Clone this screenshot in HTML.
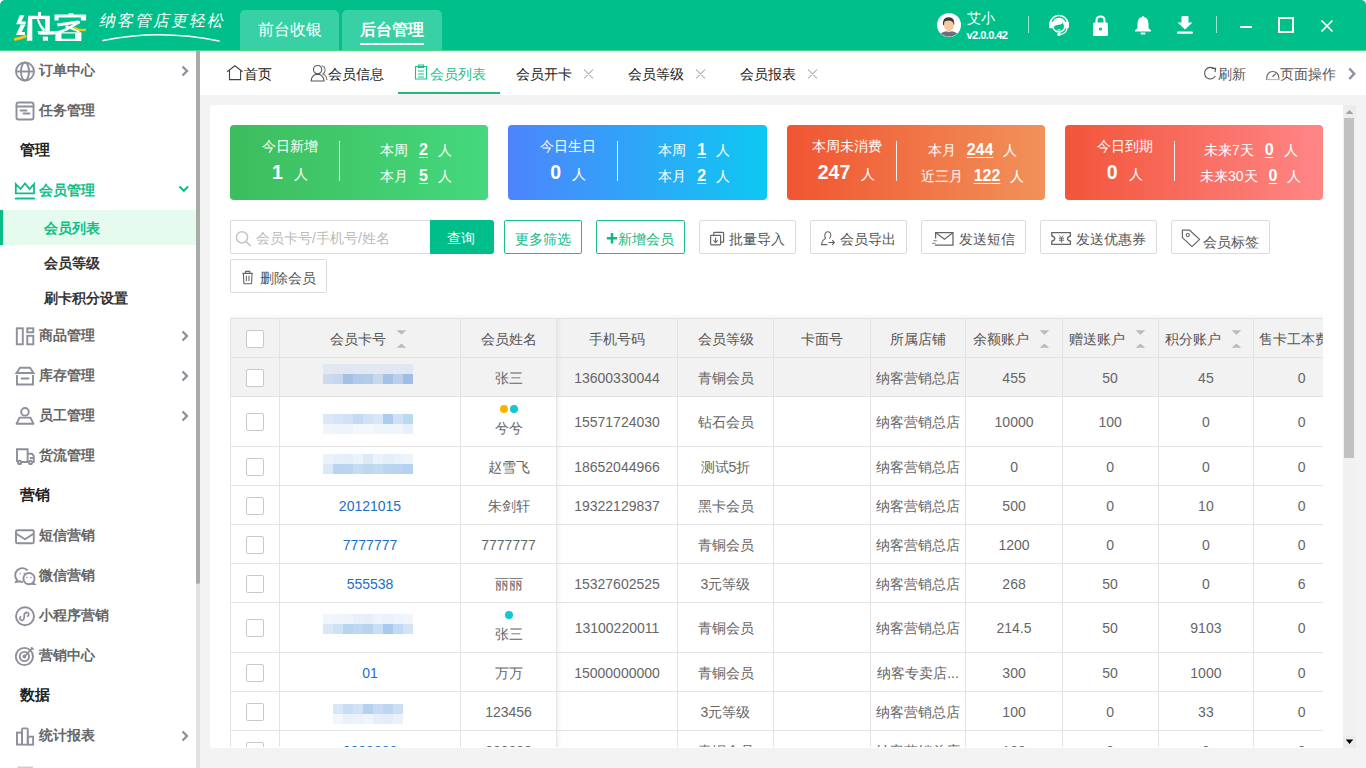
<!DOCTYPE html>
<html><head><meta charset="utf-8">
<style>
*{box-sizing:border-box;margin:0;padding:0}
html,body{width:1366px;height:768px;overflow:hidden;background:#f3f3f3;font-family:"Liberation Sans",sans-serif;font-size:14px;color:#333}
.a{position:absolute}
#hdr{position:absolute;left:0;top:0;width:1366px;height:51px;background:#01bf8b;border-radius:5px 5px 0 0;border-bottom:1px solid #4cd882}
.ttab{position:absolute;top:10px;height:40px;width:98px;background:#38d0a5;border-radius:5px 5px 0 0;color:#fff;font-size:16px;text-align:center;line-height:40px}
.ttab b{font-weight:bold}
#side{position:absolute;left:0;top:51px;width:196px;height:717px;background:#fff;overflow:hidden}
.mi{position:absolute;left:0;width:196px;height:20px;font-size:14px;font-weight:bold;color:#666;line-height:20px}
.mi .t{position:absolute;left:39px;top:-1px}
.mi svg.ic{position:absolute;left:15px;top:0}
.mi .chev{position:absolute;left:179px;top:4px}
.sec{position:absolute;margin-top:-1px;left:20px;font-size:14.5px;font-weight:bold;color:#222;line-height:20px}
.sub{position:absolute;margin-top:-1px;left:44px;font-size:14px;font-weight:bold;color:#333;line-height:20px}
#sbar{position:absolute;left:196px;top:51px;width:4px;height:717px;background:#e2e2e2}
#sthumb{position:absolute;left:196px;top:51px;width:4px;height:533px;background:#aaa;border-radius:0 0 2px 2px}
#tabs{position:absolute;left:200px;top:51px;width:1166px;height:44px;background:#fff}
.tb{position:absolute;top:15px;font-size:14px;color:#222;line-height:16px;white-space:nowrap}
.tb .x{color:#bbb;font-size:15px}
#card{position:absolute;left:210px;top:105px;width:1146px;height:643px;background:#fff;overflow:hidden;border-radius:3px}
.stat{position:absolute;top:20px;width:258.25px;height:75px;border-radius:4px;color:#fff}
.stat .lb{position:absolute;left:0;width:120px;text-align:center;white-space:nowrap}
.stat .l1{top:10.5px;font-size:14px;line-height:20px}
.stat .l2{top:35px;font-size:14px;line-height:24px}
.stat .big{font-size:19.5px;font-weight:bold;margin-right:11px}
.stat .dv{position:absolute;left:109px;top:16px;width:1px;height:40px;background:rgba(255,255,255,.9)}
.stat .rb{position:absolute;left:109px;width:154px;text-align:center;font-size:14px;line-height:20px;white-space:nowrap}
.stat .r1{top:15px}.stat .r2{top:41px}
.stat u{font-weight:bold;font-size:16px;text-decoration:underline;text-underline-offset:2px;margin:0 10px 0 11px}
.btn{position:absolute;height:34px;border:1px solid #dcdcdc;border-radius:2px;background:#fff;color:#555;font-size:14px;line-height:32px;white-space:nowrap}
.bt{font-size:14px;line-height:20px;white-space:nowrap}
.btn.g{border-color:#19bf8c;color:#13b886}
.td{font-size:14px;line-height:20px;text-align:center;white-space:nowrap;overflow:hidden}
.cb{width:18px;height:18px;border:1px solid #c9c9c9;border-radius:2px;background:#fff}
</style></head><body>

<!-- HEADER -->
<div class="a" style="left:0;top:0;width:1366px;height:8px;background:#fff"></div>
<div id="hdr">
  <svg class="a" style="left:0;top:0" width="95" height="50" viewBox="0 0 95 50">
  <g fill="#fff">
    <path d="M19.7 15.2 H24.4 L21.4 21.4 H25.6 V24.3 H16.1 Z"/>
    <path d="M20.8 24.6 H25.5 L21.6 32 H24.9 V35 H15.9 Z"/>
    <path d="M28 17.3 H32.3 V40.7 H26.8 Z"/>
    <path d="M38.1 12 H41 V18.5 H38.1Z"/>
    <path d="M28.2 15.8 H49.8 V31.4 H45.1 V19 H28.2Z"/>
    <path d="M38.6 19 Q40.5 25 45.6 30 L43.4 31.6 Q38.4 26 37 19Z"/>
    <path d="M42.8 36.6 H48 V40.7 H42.8Z"/>
    <path d="M68.6 13.2 H73.3 V16.1 H68.6Z"/>
    <path d="M54.5 14.4 H86.1 V20.5 H80.9 V17.6 H58.6 V20.5 H54.5Z"/>
    <path d="M57 23.6 L78.3 20.6 L79 23.2 L57.8 26.4Z"/>
    <path d="M37.5 31 Q48 31.5 55 31.3 Q63 30.5 70 26 Q75 23 79.4 20.6 L80.2 23 Q74 26.5 67 30.6 Q60 34 54 34.6 Q46 35 38.6 34.4Z"/>
    <path d="M66 25 Q72 27 80 30.5 L79 32.6 Q71 29 65 27.3Z"/>
    <path d="M55.4 32.2 H81.4 V41 H55.4Z M61.5 33.6 V38.7 H75 V33.6Z" fill-rule="evenodd"/>
  </g>
  <path d="M15.3 39.2 Q20 38.6 25.2 36.4" stroke="#ffc20e" stroke-width="3" fill="none" stroke-linecap="round"/>
  <path d="M74.2 26.4 Q80 30 86.2 28.6 L85.8 31 Q80 32 74 28.4Z" fill="#ffc20e"/>
</svg>
  <div class="a" style="left:100px;top:11px;font-size:16px;color:#fff;line-height:20px;letter-spacing:2px;font-family:'Liberation Serif',serif;transform:skewX(-12deg)">纳客管店更轻松</div>
  <svg class="a" style="left:100px;top:28px" width="126" height="16"><path d="M3 12.5 Q60 1 119 13" stroke="#fff" stroke-width="1.5" fill="none" stroke-linecap="round"/></svg>
  <div class="ttab" style="left:240px;width:99px">前台收银</div>
  <div class="ttab" style="left:342px;width:100px;font-weight:bold;font-size:16px">后台管理<div class="a" style="left:18px;top:33px;width:64px;height:2px;background:#fff"></div></div>
  <!-- avatar -->
  <svg class="a" style="left:937px;top:13px" width="24" height="24" viewBox="0 0 24 24">
    <circle cx="12" cy="12" r="12" fill="#fff"/>
    <clipPath id="avc"><circle cx="12" cy="12" r="11.5"/></clipPath>
    <g clip-path="url(#avc)">
      <path d="M1 25 Q2 18.6 12 18 Q22 18.6 23 25Z" fill="#6c6e80"/>
      <rect x="9.6" y="15" width="4.6" height="4" fill="#f4c8a0"/>
      <path d="M6.6 11 Q6.6 17.4 12 17.6 Q17.2 17.4 17.2 11 Q17 7 12 7 Q6.8 7 6.6 11Z" fill="#f5c9a1"/>
      <path d="M6 12 Q5.2 4.4 11.6 4.2 Q17.6 4 17.4 11.6 L16.6 11.4 Q16.4 8 12.2 7.6 Q8 7.6 7.2 9.4 L7 12Z" fill="#383838"/>
    </g>
  </svg>
  <div class="a" style="left:967px;top:9px;font-size:14px;color:#fff;line-height:18px">艾小</div>
  <div class="a" style="left:966.5px;top:28px;font-size:11px;color:#fff;line-height:14px;font-weight:bold;letter-spacing:-0.55px">v2.0.0.42</div>
  <div class="a" style="left:1028px;top:16px;width:1px;height:17px;background:rgba(255,255,255,.6)"></div>
  <!-- headset -->
  <svg class="a" style="left:1044px;top:10px" width="30" height="30" viewBox="1044 10 30 30">
    <path d="M1050.2 23 A8.9 8.9 0 0 1 1067.8 23" stroke="#fff" stroke-width="1.5" fill="none"/>
    <path d="M1052.2 26 Q1052.2 17.8 1059 17.8 Q1065.8 17.8 1065.8 26 L1065.6 28 Q1063.6 32.6 1059 32.8 Q1054.4 32.6 1052.4 28Z" fill="#fff"/>
    <path d="M1054 26.6 Q1055.6 25 1060.6 24.6 Q1062.4 24 1062.4 22.2 Q1063.9 24.2 1063.9 27.2 Q1063.4 30.8 1059.2 31.2 Q1055 31 1054.2 28.6Z" fill="#02bf8b"/>
    <rect x="1049" y="21.7" width="4.4" height="6.6" rx="1.2" fill="#fff"/>
    <rect x="1064.6" y="21.7" width="4.4" height="6.6" rx="1.2" fill="#fff"/>
    <path d="M1057.4 30 H1060.6" stroke="#fff" stroke-width="1"/>
    <path d="M1067 28 Q1066.4 33.6 1060.2 34.4" stroke="#fff" stroke-width="1.3" fill="none"/>
    <circle cx="1059" cy="34.4" r="1.7" fill="#fff"/>
  </svg>
  <!-- lock -->
  <svg class="a" style="left:1092px;top:15px" width="17" height="22" viewBox="0 0 17 22">
    <path d="M4.5 8 V5.5 Q4.5 1.5 8.5 1.5 Q12.5 1.5 12.5 5.5 V8" stroke="#fff" stroke-width="2" fill="none"/>
    <rect x="1" y="7.5" width="15" height="13.5" rx="1.5" fill="#fff"/>
    <circle cx="8.5" cy="14" r="1.6" fill="#02bf8b"/>
  </svg>
  <!-- bell -->
  <svg class="a" style="left:1134px;top:15px" width="18" height="20" viewBox="0 0 18 20">
    <path d="M9 1 Q10 1 10 2 Q14.5 3 14.5 9 V13 L17 15.5 V16.5 H1 V15.5 L3.5 13 V9 Q3.5 3 8 2 Q8 1 9 1Z" fill="#fff"/>
    <rect x="6.5" y="17.5" width="5" height="2" rx="1" fill="#fff"/>
  </svg>
  <!-- download -->
  <svg class="a" style="left:1176px;top:15px" width="18" height="20" viewBox="0 0 18 20">
    <rect x="5.5" y="1" width="7" height="7" rx="1" fill="#fff"/>
    <path d="M1.5 7.5 H16.5 L9 14.5Z" fill="#fff"/>
    <rect x="1" y="16.5" width="16" height="2.2" rx="1" fill="#fff"/>
  </svg>
  <div class="a" style="left:1216px;top:16px;width:1px;height:17px;background:rgba(255,255,255,.6)"></div>
  <div class="a" style="left:1240px;top:26px;width:12px;height:2px;background:#fff"></div>
  <div class="a" style="left:1278px;top:17px;width:16px;height:16px;border:2px solid #fffde6"></div>
  <svg class="a" style="left:1320px;top:19px" width="14" height="14" viewBox="0 0 14 14"><path d="M1.5 1.5 L12.5 12.5 M12.5 1.5 L1.5 12.5" stroke="#fff" stroke-width="1.7"/></svg>
</div>

<!-- SIDEBAR -->
<div id="side">
<svg class="a" style="left:0;top:0" width="196" height="717" viewBox="0 51 196 717" fill="none" stroke="#8e8f9c" stroke-width="1.9">
  <!-- globe -->
  <circle cx="25" cy="71.5" r="9"/><ellipse cx="25" cy="71.5" rx="4" ry="9"/><path d="M16 71.5H34"/>
  <!-- task -->
  <rect x="16.5" y="102.5" width="17" height="17" rx="2"/><path d="M16.5 106.5H33.5M20.5 110.5H26.5M23.5 113.5H29.5" stroke-linecap="round"/>
  <!-- crown -->
  <path d="M15.8 184 L20.5 189 L25 183.5 L29.5 189 L34 184 V193.3 H15.8Z" stroke="#0fbf8a" stroke-width="1.8" stroke-linejoin="miter"/>
  <path d="M15.8 198.5H34" stroke="#0fbf8a" stroke-width="2.2" stroke-linecap="round"/>
  <!-- goods -->
  <rect x="16.8" y="328.3" width="6" height="16"/><rect x="27.3" y="328.3" width="6" height="4"/><rect x="27.3" y="335.8" width="6" height="8.5"/>
  <!-- box -->
  <path d="M16.5 373 L20 367.8 H30 L33.5 373Z"/><path d="M17 375 V384.5 H33 V375"/><path d="M21.5 378.5H28.5" stroke-width="1.8" stroke-linecap="round"/>
  <!-- person -->
  <circle cx="25" cy="411.8" r="3.8"/><path d="M16.5 423.8 L19.5 417.6 H30.5 L33.5 423.8Z" stroke-linejoin="round"/>
  <!-- truck -->
  <path d="M17 462 V449.3 H27.6 V462 M27.6 453.8 H32 L33.8 456 V462 H32.2 M22 462 H28.3 M29.8 458H33.5"/><circle cx="19.6" cy="462.4" r="1.6"/><circle cx="30.5" cy="462.4" r="1.6"/>
  <!-- envelope -->
  <rect x="16" y="530.3" width="17.8" height="13" rx="1.2"/><path d="M16.3 533.8 L25 539.3 L33.5 533.8" stroke-linejoin="round"/>
  <!-- wechat -->
  <path d="M27.6 570.5 A6.5 6.5 0 1 0 17 580 L16 582 L19.8 581.3 A6.5 6.5 0 0 0 23 581.8"/>
  <circle cx="29" cy="578.6" r="5.6"/><path d="M33 582.7 L34.2 584 L31.5 583.7"/>
  <path d="M19.6 573.5h1.2M23.6 573.5h1.2M26.4 577.5h1.2M30.4 577.5h1.2" stroke-width="1.4"/>
  <!-- mini program -->
  <circle cx="25" cy="616.2" r="9"/><path d="M21.2 616.2 Q19.5 617 19.8 618.8 Q20.5 620.6 22.3 620.4 Q24 620 24.2 617.5 V615 Q24.6 612.5 26.6 612.3 Q28.6 612.4 28.8 614.2 Q28.8 616 27 616.4" stroke-width="1.7"/>
  <!-- target -->
  <circle cx="24.4" cy="656.5" r="8.6"/><circle cx="24.4" cy="656.5" r="4.6"/><circle cx="24.4" cy="656.5" r="1" fill="#8e8f9c"/><path d="M24.6 656.3 L32 648.3 M31.5 647 L32.2 648.8 L33.8 649" stroke-width="1.7"/>
  <!-- chart -->
  <rect x="17" y="732.6" width="5" height="12"/><rect x="22" y="728.4" width="5.8" height="16.2" rx="1"/><rect x="27.8" y="736.7" width="5.3" height="8"/>
  <path d="M17.5 767.5H33" stroke="#ccc"/>
  <!-- chevrons -->
  <g stroke-width="2.3" stroke="#8e8f9c"><path d="M182.5 66.5 L187 71 L182.5 75.5"/><path d="M182.5 331.5 L187 336 L182.5 340.5"/><path d="M182.5 371.5 L187 376 L182.5 380.5"/><path d="M182.5 411.5 L187 416 L182.5 420.5"/><path d="M182.5 731.5 L187 736 L182.5 740.5"/></g>
  <path d="M179.5 186.5 L183.8 190.8 L188.1 186.5" stroke="#0fbf8a" stroke-width="2"/>
</svg>
<div class="a" style="left:0;top:159px;width:196px;height:35px;background:#e5fbed"></div>
<div class="a" style="left:0;top:159px;width:3px;height:35px;background:#08be86"></div>
<div class="mi" style="top:10px"><span class="t">订单中心</span></div>
<div class="mi" style="top:50px"><span class="t">任务管理</span></div>
<div class="sec" style="top:90px">管理</div>
<div class="mi" style="top:130px;color:#0fbf8a"><span class="t">会员管理</span></div>
<div class="sub" style="top:168px;color:#0fbf8a">会员列表</div>
<div class="sub" style="top:203px">会员等级</div>
<div class="sub" style="top:238px">刷卡积分设置</div>
<div class="mi" style="top:275px"><span class="t">商品管理</span></div>
<div class="mi" style="top:315px"><span class="t">库存管理</span></div>
<div class="mi" style="top:355px"><span class="t">员工管理</span></div>
<div class="mi" style="top:395px"><span class="t">货流管理</span></div>
<div class="sec" style="top:435px">营销</div>
<div class="mi" style="top:475px"><span class="t">短信营销</span></div>
<div class="mi" style="top:515px"><span class="t">微信营销</span></div>
<div class="mi" style="top:555px"><span class="t">小程序营销</span></div>
<div class="mi" style="top:595px"><span class="t">营销中心</span></div>
<div class="sec" style="top:635px">数据</div>
<div class="mi" style="top:675px"><span class="t">统计报表</span></div>
</div>
<div id="sbar"></div><div id="sthumb"></div>

<!-- TABS -->
<div id="tabs">
<svg class="a" style="left:0;top:0" width="1166" height="44" viewBox="200 51 1166 44" fill="none" stroke-width="1.1">
  <path d="M227.2 71.8 L234.9 65.8 L242.6 71.8 M229.5 70.5 V79.6 H240.6 V70.5" stroke="#444"/>
  <circle cx="317.6" cy="69.6" r="4.1" stroke="#555"/><path d="M311.2 81 Q311.5 74.6 317.6 74.3 Q323.6 74.6 324 81Z" stroke="#555"/><path d="M321.5 65.8 Q325.5 66.5 325 71 Q324.5 73 323 74 Q326.6 75.5 327 80" stroke="#777"/>
  <path d="M415.5 66.5 H426.5 V79 H415.5Z M418.5 65 H423.5 V67.5 H418.5Z M418 71 H424 M418 74 H424 M418 77 H424" stroke="#1ebf8d"/>
  <path d="M584 69.5 L593 78.5 M593 69.5 L584 78.5 M696 69.5 L705 78.5 M705 69.5 L696 78.5 M808 69.5 L817 78.5 M817 69.5 L808 78.5" stroke="#bdbdbd" stroke-width="1.2"/>
  <path d="M1214.6 69.2 A5.8 5.8 0 1 0 1215.4 76" stroke="#555" stroke-width="1.1"/><path d="M1211.8 68.4 L1215.6 68.4 L1215 72.2" stroke="#555" stroke-width="1.1"/>
  <path d="M1266.8 79.5 V77.5 A6 6 0 0 1 1278.8 77.5 V79.5Z" stroke="#666" stroke-width="1.1"/><path d="M1272.5 76.8 L1275.8 73.6" stroke="#666" stroke-width="1.2"/><path d="M1267 79.5H1279" stroke="#bbb" stroke-width="1.3"/>
  <path d="M1349.3 68.5 L1354.2 73.8 L1349.3 79" stroke="#8e8f9c" stroke-width="2.4"/>
</svg>
<div class="tb" style="left:44px">首页</div>
<div class="tb" style="left:128px">会员信息</div>
<div class="tb" style="left:230px;color:#1ebf8d">会员列表</div>
<div class="a" style="left:198px;top:41px;width:102px;height:2px;background:#25b872"></div>
<div class="tb" style="left:316px">会员开卡</div>
<div class="tb" style="left:428px">会员等级</div>
<div class="tb" style="left:540px">会员报表</div>
<div class="tb" style="left:1018px;color:#555">刷新</div>
<div class="tb" style="left:1080px;color:#555">页面操作</div>
</div>

<!-- CARD -->
<div id="card">
<div class="stat" style="left:20px;background:linear-gradient(90deg,#3dbd5d,#45d87e)"><div class="lb l1">今日新增</div><div class="lb l2"><span class="big">1</span><span class="ren">人</span></div><div class="dv"></div><div class="rb r1">本周<u>2</u>人</div><div class="rb r2">本月<u>5</u>人</div></div>
<div class="stat" style="left:298.25px;background:linear-gradient(90deg,#4e84fd,#0ec8f2)"><div class="lb l1">今日生日</div><div class="lb l2"><span class="big">0</span><span class="ren">人</span></div><div class="dv"></div><div class="rb r1">本周<u>1</u>人</div><div class="rb r2">本月<u>2</u>人</div></div>
<div class="stat" style="left:576.5px;background:linear-gradient(90deg,#f05532,#f1925a)"><div class="lb l1">本周未消费</div><div class="lb l2"><span class="big">247</span><span class="ren">人</span></div><div class="dv"></div><div class="rb r1">本月<u>244</u>人</div><div class="rb r2">近三月<u>122</u>人</div></div>
<div class="stat" style="left:854.75px;background:linear-gradient(90deg,#f2553a,#ff8686)"><div class="lb l1">今日到期</div><div class="lb l2"><span class="big">0</span><span class="ren">人</span></div><div class="dv"></div><div class="rb r1">未来7天<u>0</u>人</div><div class="rb r2">未来30天<u>0</u>人</div></div>
<div class="a" style="left:20px;top:115px;width:201px;height:34px;border:1px solid #dcdcdc;border-right:0;border-radius:2px 0 0 2px"></div>
<div class="a" style="left:220px;top:115px;width:64px;height:34px;background:#00be8a;border-radius:0 3px 3px 0"></div>
<div class="a bt" style="left:46px;top:123px;color:#bbb;">会员卡号/手机号/姓名</div>
<div class="a bt" style="left:237px;top:123px;color:#fff;">查询</div>
<div class="btn g" style="left:294px;top:115px;width:78px;height:34px"></div>
<div class="a bt" style="left:305px;top:124px;color:#13b886;">更多筛选</div>
<div class="btn g" style="left:386px;top:115px;width:89px;height:34px"></div>
<div class="a bt" style="left:408px;top:124px;color:#13b886;">新增会员</div>
<div class="btn" style="left:489px;top:115px;width:97px;height:34px"></div>
<div class="a bt" style="left:519px;top:124px;color:#555;">批量导入</div>
<div class="btn" style="left:600px;top:115px;width:97px;height:34px"></div>
<div class="a bt" style="left:630px;top:124px;color:#555;">会员导出</div>
<div class="btn" style="left:711px;top:115px;width:105px;height:34px"></div>
<div class="a bt" style="left:749px;top:124px;color:#555;">发送短信</div>
<div class="btn" style="left:830px;top:115px;width:117px;height:34px"></div>
<div class="a bt" style="left:866px;top:124px;color:#555;">发送优惠券</div>
<div class="btn" style="left:961px;top:115px;width:99px;height:34px"></div>
<div class="a bt" style="left:993px;top:127px;color:#555;">会员标签</div>
<div class="btn" style="left:20px;top:154px;width:97px;height:34px"></div>
<div class="a bt" style="left:50px;top:163px;color:#555;">删除会员</div>
<svg class="a" style="left:0;top:0" width="1146" height="200" viewBox="210 105 1146 200" fill="none" stroke="#666" stroke-width="1.2">
  <circle cx="242" cy="237.3" r="5.6" stroke="#c4c4c4" stroke-width="1.5"/><path d="M246 241.5 L250.5 246" stroke="#c4c4c4" stroke-width="1.7"/>
  <path d="M606.8 238.3 H617.2 M612 233 V243.6" stroke="#13b886" stroke-width="2.6"/>
  <path d="M713.8 235 V233.2 Q713.8 232.4 714.6 232.4 H722.8 Q723.6 232.4 723.6 233.2 V241.4 Q723.6 242.2 722.8 242.2 H720.8"/>
  <rect x="710.6" y="235.3" width="10" height="9.5" rx="0.8"/><path d="M715.6 237.5 V242.3 M713.4 240.4 L715.6 242.5 L717.8 240.4" stroke-width="1.1"/>
  <path d="M825.8 238.6 Q824.6 237.6 824.8 235.2 Q825.2 231.8 827.8 231.8 Q830.6 231.8 830.8 235.2 Q830.8 237.4 829.2 238.6" stroke-width="1.1"/><path d="M825.8 238.6 Q822 240 821.6 244.6 H827.4" stroke-width="1.1"/><path d="M828.4 242.5 H834.3 M832.2 240.2 L834.4 242.5 L832.2 244.8" stroke-width="1.1"/>
  <path d="M935.6 238.5 V232.6 H953 V245.2 H935.6 V244.4" stroke-width="1.3"/><path d="M936 232.8 L944.5 239.2 L952.8 232.8" stroke-width="1.2"/><path d="M933.4 240.6 H936.8 M932.2 243.4 H935.6" stroke="#999" stroke-width="1.1"/>
  <path d="M1051.8 232.6 H1070.4 V236 Q1067.6 236.6 1067.4 238.6 Q1067.6 240.6 1070.4 241.2 V244.4 H1051.8 V241.2 Q1054.6 240.6 1054.8 238.6 Q1054.6 236.6 1051.8 236 Z" stroke-width="1.3"/>
  <path d="M1059.4 235.8 L1061.4 237.6 L1063.4 235.8 M1061.4 237.6 V242.6 M1058.8 238.2 H1064 M1058.8 240.2 H1064" stroke-width="1"/>
  <path d="M1182.4 230.2 H1189.6 L1199.6 239.4 L1192 246.6 L1182.4 237.6 Z" stroke-width="1.2" stroke-linejoin="round"/><circle cx="1187.8" cy="235.1" r="1.6" stroke-width="1.1"/>
  <path d="M242.4 273.4 H252.8 M245.6 273.2 V271.4 H249.8 V273.2 M243.4 273.8 L243.8 283 Q244 283.8 244.8 283.8 H250.6 Q251.4 283.8 251.6 283 L252 273.8 M246.4 275.8 V281 M249 275.8 V281" stroke-width="1.1"/>
</svg>
<!--TBL--><div id="tbl" class="a" style="left:20px;top:209px;width:1093px;height:433px;overflow:hidden">
<div class="a" style="left:0;top:0;width:1093px;height:4px;background:linear-gradient(rgba(0,0,0,0),rgba(0,0,0,.035))"></div>
<div class="a" style="left:0;top:4px;width:1093px;height:78px;background:#f2f2f2"></div>
<div class="a" style="left:0;top:4px;width:1093px;height:1px;background:#e3e3e3"></div>
<div class="a" style="left:0;top:43px;width:1093px;height:1px;background:#e3e3e3"></div>
<div class="a" style="left:0;top:82px;width:1093px;height:1px;background:#e3e3e3"></div>
<div class="a" style="left:0;top:132px;width:1093px;height:1px;background:#e3e3e3"></div>
<div class="a" style="left:0;top:171px;width:1093px;height:1px;background:#e3e3e3"></div>
<div class="a" style="left:0;top:210px;width:1093px;height:1px;background:#e3e3e3"></div>
<div class="a" style="left:0;top:249px;width:1093px;height:1px;background:#e3e3e3"></div>
<div class="a" style="left:0;top:288px;width:1093px;height:1px;background:#e3e3e3"></div>
<div class="a" style="left:0;top:338px;width:1093px;height:1px;background:#e3e3e3"></div>
<div class="a" style="left:0;top:377px;width:1093px;height:1px;background:#e3e3e3"></div>
<div class="a" style="left:0;top:416px;width:1093px;height:1px;background:#e3e3e3"></div>
<div class="a" style="left:0;top:455px;width:1093px;height:1px;background:#e3e3e3"></div>
<div class="a" style="left:0px;top:4px;width:1px;height:433px;background:#e3e3e3"></div>
<div class="a" style="left:49px;top:4px;width:1px;height:433px;background:#e3e3e3"></div>
<div class="a" style="left:230px;top:4px;width:1px;height:433px;background:#e3e3e3"></div>
<div class="a" style="left:326px;top:4px;width:1px;height:433px;background:#e3e3e3"></div>
<div class="a" style="left:447px;top:4px;width:1px;height:433px;background:#e3e3e3"></div>
<div class="a" style="left:543px;top:4px;width:1px;height:433px;background:#e3e3e3"></div>
<div class="a" style="left:639.6px;top:4px;width:1px;height:433px;background:#e3e3e3"></div>
<div class="a" style="left:735.4px;top:4px;width:1px;height:433px;background:#e3e3e3"></div>
<div class="a" style="left:831.7px;top:4px;width:1px;height:433px;background:#e3e3e3"></div>
<div class="a" style="left:927.5px;top:4px;width:1px;height:433px;background:#e3e3e3"></div>
<div class="a" style="left:1023.3px;top:4px;width:1px;height:433px;background:#e3e3e3"></div>
<div class="a" style="left:327px;top:4px;width:5px;height:433px;background:linear-gradient(90deg,rgba(0,0,0,.045),rgba(0,0,0,0))"></div>
<div class="a cb" style="left:16px;top:15.5px"></div>
<div class="a cb" style="left:16px;top:54.5px"></div>
<div class="a cb" style="left:16px;top:99.0px"></div>
<div class="a cb" style="left:16px;top:143.5px"></div>
<div class="a cb" style="left:16px;top:182.5px"></div>
<div class="a cb" style="left:16px;top:221.5px"></div>
<div class="a cb" style="left:16px;top:260.5px"></div>
<div class="a cb" style="left:16px;top:305.0px"></div>
<div class="a cb" style="left:16px;top:349.5px"></div>
<div class="a cb" style="left:16px;top:388.5px"></div>
<div class="a cb" style="left:16px;top:427.5px"></div>
<div class="a td" style="left:100px;top:15px;width:56px;color:#555;text-align:left">会员卡号</div>
<svg class="a" style="left:166px;top:16px" width="11" height="18" viewBox="0 0 11 18"><path d="M0.5 0.3 H10.3 L5.4 4.7Z M0.5 17.8 H10.3 L5.4 13.4Z" fill="#bcbcbc"/></svg>
<div class="a td" style="left:231px;top:15px;width:95px;color:#555;">会员姓名</div>
<div class="a td" style="left:327px;top:15px;width:120px;color:#555;">手机号码</div>
<div class="a td" style="left:448px;top:15px;width:95px;color:#555;">会员等级</div>
<div class="a td" style="left:544px;top:15px;width:95.60000000000002px;color:#555;">卡面号</div>
<div class="a td" style="left:640.6px;top:15px;width:94.79999999999995px;color:#555;">所属店铺</div>
<div class="a td" style="left:743px;top:15px;width:56px;color:#555;text-align:left">余额账户</div>
<svg class="a" style="left:809px;top:16px" width="11" height="18" viewBox="0 0 11 18"><path d="M0.5 0.3 H10.3 L5.4 4.7Z M0.5 17.8 H10.3 L5.4 13.4Z" fill="#bcbcbc"/></svg>
<div class="a td" style="left:839px;top:15px;width:56px;color:#555;text-align:left">赠送账户</div>
<svg class="a" style="left:905px;top:16px" width="11" height="18" viewBox="0 0 11 18"><path d="M0.5 0.3 H10.3 L5.4 4.7Z M0.5 17.8 H10.3 L5.4 13.4Z" fill="#bcbcbc"/></svg>
<div class="a td" style="left:935px;top:15px;width:56px;color:#555;text-align:left">积分账户</div>
<svg class="a" style="left:1001px;top:16px" width="11" height="18" viewBox="0 0 11 18"><path d="M0.5 0.3 H10.3 L5.4 4.7Z M0.5 17.8 H10.3 L5.4 13.4Z" fill="#bcbcbc"/></svg>
<div class="a td" style="left:1029px;top:15px;width:100px;color:#555;text-align:left">售卡工本费</div>
<div class="a td" style="left:231px;top:54px;width:95px;color:#666;">张三</div>
<div class="a td" style="left:327px;top:54px;width:120px;color:#666;">13600330044</div>
<div class="a td" style="left:448px;top:54px;width:95px;color:#666;">青铜会员</div>
<div class="a td" style="left:544px;top:54px;width:95.60000000000002px;color:#666;"></div>
<div class="a td" style="left:640.6px;top:54px;width:94.79999999999995px;color:#666;">纳客营销总店</div>
<div class="a td" style="left:736.4px;top:54px;width:95.30000000000007px;color:#666;">455</div>
<div class="a td" style="left:832.7px;top:54px;width:94.79999999999995px;color:#666;">50</div>
<div class="a td" style="left:928.5px;top:54px;width:94.79999999999995px;color:#666;">45</div>
<div class="a td" style="left:1024.3px;top:54px;width:94.70000000000005px;color:#666;">0</div>
<div class="a td" style="left:231px;top:104px;width:95px;color:#666;">兮兮</div>
<div class="a td" style="left:327px;top:98px;width:120px;color:#666;">15571724030</div>
<div class="a td" style="left:448px;top:98px;width:95px;color:#666;">钻石会员</div>
<div class="a td" style="left:544px;top:98px;width:95.60000000000002px;color:#666;"></div>
<div class="a td" style="left:640.6px;top:98px;width:94.79999999999995px;color:#666;">纳客营销总店</div>
<div class="a td" style="left:736.4px;top:98px;width:95.30000000000007px;color:#666;">10000</div>
<div class="a td" style="left:832.7px;top:98px;width:94.79999999999995px;color:#666;">100</div>
<div class="a td" style="left:928.5px;top:98px;width:94.79999999999995px;color:#666;">0</div>
<div class="a td" style="left:1024.3px;top:98px;width:94.70000000000005px;color:#666;">0</div>
<div class="a td" style="left:231px;top:143px;width:95px;color:#666;">赵雪飞</div>
<div class="a td" style="left:327px;top:143px;width:120px;color:#666;">18652044966</div>
<div class="a td" style="left:448px;top:143px;width:95px;color:#666;">测试5折</div>
<div class="a td" style="left:544px;top:143px;width:95.60000000000002px;color:#666;"></div>
<div class="a td" style="left:640.6px;top:143px;width:94.79999999999995px;color:#666;">纳客营销总店</div>
<div class="a td" style="left:736.4px;top:143px;width:95.30000000000007px;color:#666;">0</div>
<div class="a td" style="left:832.7px;top:143px;width:94.79999999999995px;color:#666;">0</div>
<div class="a td" style="left:928.5px;top:143px;width:94.79999999999995px;color:#666;">0</div>
<div class="a td" style="left:1024.3px;top:143px;width:94.70000000000005px;color:#666;">0</div>
<div class="a td" style="left:50px;top:182px;width:180px;color:#1c6fc6;">20121015</div>
<div class="a td" style="left:231px;top:182px;width:95px;color:#666;">朱剑轩</div>
<div class="a td" style="left:327px;top:182px;width:120px;color:#666;">19322129837</div>
<div class="a td" style="left:448px;top:182px;width:95px;color:#666;">黑卡会员</div>
<div class="a td" style="left:544px;top:182px;width:95.60000000000002px;color:#666;"></div>
<div class="a td" style="left:640.6px;top:182px;width:94.79999999999995px;color:#666;">纳客营销总店</div>
<div class="a td" style="left:736.4px;top:182px;width:95.30000000000007px;color:#666;">500</div>
<div class="a td" style="left:832.7px;top:182px;width:94.79999999999995px;color:#666;">0</div>
<div class="a td" style="left:928.5px;top:182px;width:94.79999999999995px;color:#666;">10</div>
<div class="a td" style="left:1024.3px;top:182px;width:94.70000000000005px;color:#666;">0</div>
<div class="a td" style="left:50px;top:221px;width:180px;color:#1c6fc6;">7777777</div>
<div class="a td" style="left:231px;top:221px;width:95px;color:#666;">7777777</div>
<div class="a td" style="left:327px;top:221px;width:120px;color:#666;"></div>
<div class="a td" style="left:448px;top:221px;width:95px;color:#666;">青铜会员</div>
<div class="a td" style="left:544px;top:221px;width:95.60000000000002px;color:#666;"></div>
<div class="a td" style="left:640.6px;top:221px;width:94.79999999999995px;color:#666;">纳客营销总店</div>
<div class="a td" style="left:736.4px;top:221px;width:95.30000000000007px;color:#666;">1200</div>
<div class="a td" style="left:832.7px;top:221px;width:94.79999999999995px;color:#666;">0</div>
<div class="a td" style="left:928.5px;top:221px;width:94.79999999999995px;color:#666;">0</div>
<div class="a td" style="left:1024.3px;top:221px;width:94.70000000000005px;color:#666;">0</div>
<div class="a td" style="left:50px;top:260px;width:180px;color:#1c6fc6;">555538</div>
<div class="a td" style="left:231px;top:260px;width:95px;color:#666;">丽丽</div>
<div class="a td" style="left:327px;top:260px;width:120px;color:#666;">15327602525</div>
<div class="a td" style="left:448px;top:260px;width:95px;color:#666;">3元等级</div>
<div class="a td" style="left:544px;top:260px;width:95.60000000000002px;color:#666;"></div>
<div class="a td" style="left:640.6px;top:260px;width:94.79999999999995px;color:#666;">纳客营销总店</div>
<div class="a td" style="left:736.4px;top:260px;width:95.30000000000007px;color:#666;">268</div>
<div class="a td" style="left:832.7px;top:260px;width:94.79999999999995px;color:#666;">50</div>
<div class="a td" style="left:928.5px;top:260px;width:94.79999999999995px;color:#666;">0</div>
<div class="a td" style="left:1024.3px;top:260px;width:94.70000000000005px;color:#666;">6</div>
<div class="a td" style="left:231px;top:310px;width:95px;color:#666;">张三</div>
<div class="a td" style="left:327px;top:304px;width:120px;color:#666;">13100220011</div>
<div class="a td" style="left:448px;top:304px;width:95px;color:#666;">青铜会员</div>
<div class="a td" style="left:544px;top:304px;width:95.60000000000002px;color:#666;"></div>
<div class="a td" style="left:640.6px;top:304px;width:94.79999999999995px;color:#666;">纳客营销总店</div>
<div class="a td" style="left:736.4px;top:304px;width:95.30000000000007px;color:#666;">214.5</div>
<div class="a td" style="left:832.7px;top:304px;width:94.79999999999995px;color:#666;">50</div>
<div class="a td" style="left:928.5px;top:304px;width:94.79999999999995px;color:#666;">9103</div>
<div class="a td" style="left:1024.3px;top:304px;width:94.70000000000005px;color:#666;">0</div>
<div class="a td" style="left:50px;top:349px;width:180px;color:#1c6fc6;">01</div>
<div class="a td" style="left:231px;top:349px;width:95px;color:#666;">万万</div>
<div class="a td" style="left:327px;top:349px;width:120px;color:#666;">15000000000</div>
<div class="a td" style="left:448px;top:349px;width:95px;color:#666;">青铜会员</div>
<div class="a td" style="left:544px;top:349px;width:95.60000000000002px;color:#666;"></div>
<div class="a td" style="left:640.6px;top:349px;width:94.79999999999995px;color:#666;">纳客专卖店...</div>
<div class="a td" style="left:736.4px;top:349px;width:95.30000000000007px;color:#666;">300</div>
<div class="a td" style="left:832.7px;top:349px;width:94.79999999999995px;color:#666;">50</div>
<div class="a td" style="left:928.5px;top:349px;width:94.79999999999995px;color:#666;">1000</div>
<div class="a td" style="left:1024.3px;top:349px;width:94.70000000000005px;color:#666;">0</div>
<div class="a td" style="left:231px;top:388px;width:95px;color:#666;">123456</div>
<div class="a td" style="left:327px;top:388px;width:120px;color:#666;"></div>
<div class="a td" style="left:448px;top:388px;width:95px;color:#666;">3元等级</div>
<div class="a td" style="left:544px;top:388px;width:95.60000000000002px;color:#666;"></div>
<div class="a td" style="left:640.6px;top:388px;width:94.79999999999995px;color:#666;">纳客营销总店</div>
<div class="a td" style="left:736.4px;top:388px;width:95.30000000000007px;color:#666;">100</div>
<div class="a td" style="left:832.7px;top:388px;width:94.79999999999995px;color:#666;">0</div>
<div class="a td" style="left:928.5px;top:388px;width:94.79999999999995px;color:#666;">33</div>
<div class="a td" style="left:1024.3px;top:388px;width:94.70000000000005px;color:#666;">0</div>
<div class="a td" style="left:50px;top:427px;width:180px;color:#1c6fc6;">0000000</div>
<div class="a td" style="left:231px;top:427px;width:95px;color:#666;">000000</div>
<div class="a td" style="left:327px;top:427px;width:120px;color:#666;"></div>
<div class="a td" style="left:448px;top:427px;width:95px;color:#666;">青铜会员</div>
<div class="a td" style="left:544px;top:427px;width:95.60000000000002px;color:#666;"></div>
<div class="a td" style="left:640.6px;top:427px;width:94.79999999999995px;color:#666;">纳客营销总店</div>
<div class="a td" style="left:736.4px;top:427px;width:95.30000000000007px;color:#666;">100</div>
<div class="a td" style="left:832.7px;top:427px;width:94.79999999999995px;color:#666;">0</div>
<div class="a td" style="left:928.5px;top:427px;width:94.79999999999995px;color:#666;">0</div>
<div class="a td" style="left:1024.3px;top:427px;width:94.70000000000005px;color:#666;">0</div>
<div class="a" style="left:269.8px;top:90.89999999999998px;width:8px;height:8px;border-radius:50%;background:#fdb100"></div>
<div class="a" style="left:280px;top:90.89999999999998px;width:8px;height:8px;border-radius:50%;background:#11c8d3"></div>
<div class="a" style="left:275px;top:296.5px;width:8px;height:8px;border-radius:50%;background:#11c8d3"></div>
<div class="a" style="left:93px;top:50px;width:10px;height:10px;background:#e2e8f1"></div><div class="a" style="left:103px;top:50px;width:10px;height:10px;background:#e1e7f1"></div><div class="a" style="left:113px;top:50px;width:10px;height:10px;background:#e0e7f1"></div><div class="a" style="left:123px;top:50px;width:10px;height:10px;background:#e1e8f1"></div><div class="a" style="left:133px;top:50px;width:10px;height:10px;background:#e2e8f1"></div><div class="a" style="left:143px;top:50px;width:10px;height:10px;background:#e1e8f1"></div><div class="a" style="left:153px;top:50px;width:10px;height:10px;background:#e0e7f1"></div><div class="a" style="left:163px;top:50px;width:10px;height:10px;background:#e1e8f2"></div><div class="a" style="left:173px;top:50px;width:10px;height:10px;background:#dfe7f2"></div><div class="a" style="left:93px;top:60px;width:10px;height:10px;background:#cbdaed"></div><div class="a" style="left:103px;top:60px;width:10px;height:10px;background:#c5d7ec"></div><div class="a" style="left:113px;top:60px;width:10px;height:10px;background:#a3c0e7"></div><div class="a" style="left:123px;top:60px;width:10px;height:10px;background:#b2cae9"></div><div class="a" style="left:133px;top:60px;width:10px;height:10px;background:#b4cbea"></div><div class="a" style="left:143px;top:60px;width:10px;height:10px;background:#c7d8ec"></div><div class="a" style="left:153px;top:60px;width:10px;height:10px;background:#a4c1e7"></div><div class="a" style="left:163px;top:60px;width:10px;height:10px;background:#b9cfeb"></div><div class="a" style="left:173px;top:60px;width:10px;height:10px;background:#9fbde6"></div>
<div class="a" style="left:93px;top:100px;width:10px;height:10px;background:#dce8f7"></div><div class="a" style="left:103px;top:100px;width:10px;height:10px;background:#d5e4f6"></div><div class="a" style="left:113px;top:100px;width:10px;height:10px;background:#d0e0f5"></div><div class="a" style="left:123px;top:100px;width:10px;height:10px;background:#c4d9f3"></div><div class="a" style="left:133px;top:100px;width:10px;height:10px;background:#d2e2f6"></div><div class="a" style="left:143px;top:100px;width:10px;height:10px;background:#d8e6f7"></div><div class="a" style="left:153px;top:100px;width:10px;height:10px;background:#acccf0"></div><div class="a" style="left:163px;top:100px;width:10px;height:10px;background:#d0e1f5"></div><div class="a" style="left:173px;top:100px;width:10px;height:10px;background:#badaf2"></div><div class="a" style="left:93px;top:110px;width:10px;height:10px;background:#f2f6fc"></div><div class="a" style="left:103px;top:110px;width:10px;height:10px;background:#eef4fc"></div><div class="a" style="left:113px;top:110px;width:10px;height:10px;background:#eef4fc"></div><div class="a" style="left:123px;top:110px;width:10px;height:10px;background:#f4f8fd"></div><div class="a" style="left:133px;top:110px;width:10px;height:10px;background:#f4f8fd"></div><div class="a" style="left:143px;top:110px;width:10px;height:10px;background:#f0f5fc"></div><div class="a" style="left:153px;top:110px;width:10px;height:10px;background:#eff5fc"></div><div class="a" style="left:163px;top:110px;width:10px;height:10px;background:#f0f5fc"></div><div class="a" style="left:173px;top:110px;width:10px;height:10px;background:#e8f0fb"></div>
<div class="a" style="left:93px;top:140px;width:10px;height:10px;background:#ecf2fb"></div><div class="a" style="left:103px;top:140px;width:10px;height:10px;background:#e7effa"></div><div class="a" style="left:113px;top:140px;width:10px;height:10px;background:#e6eefa"></div><div class="a" style="left:123px;top:140px;width:10px;height:10px;background:#eaf2fb"></div><div class="a" style="left:133px;top:140px;width:10px;height:10px;background:#dde9f7"></div><div class="a" style="left:143px;top:140px;width:10px;height:10px;background:#ecf2fb"></div><div class="a" style="left:153px;top:140px;width:10px;height:10px;background:#e6eefa"></div><div class="a" style="left:163px;top:140px;width:10px;height:10px;background:#e9f1fb"></div><div class="a" style="left:173px;top:140px;width:10px;height:10px;background:#ecf3fb"></div><div class="a" style="left:93px;top:150px;width:10px;height:10px;background:#dae8f7"></div><div class="a" style="left:103px;top:150px;width:10px;height:10px;background:#b9d4f0"></div><div class="a" style="left:113px;top:150px;width:10px;height:10px;background:#bad5f1"></div><div class="a" style="left:123px;top:150px;width:10px;height:10px;background:#c6dcf3"></div><div class="a" style="left:133px;top:150px;width:10px;height:10px;background:#bdd7f1"></div><div class="a" style="left:143px;top:150px;width:10px;height:10px;background:#c2daf2"></div><div class="a" style="left:153px;top:150px;width:10px;height:10px;background:#bbd5f1"></div><div class="a" style="left:163px;top:150px;width:10px;height:10px;background:#b9d4f0"></div><div class="a" style="left:173px;top:150px;width:10px;height:10px;background:#b5d1f0"></div>
<div class="a" style="left:93px;top:300px;width:10px;height:10px;background:#f2f6fc"></div><div class="a" style="left:103px;top:300px;width:10px;height:10px;background:#f0f5fc"></div><div class="a" style="left:113px;top:300px;width:10px;height:10px;background:#eff4fc"></div><div class="a" style="left:123px;top:300px;width:10px;height:10px;background:#e8f0fa"></div><div class="a" style="left:133px;top:300px;width:10px;height:10px;background:#e6eefa"></div><div class="a" style="left:143px;top:300px;width:10px;height:10px;background:#eef4fc"></div><div class="a" style="left:153px;top:300px;width:10px;height:10px;background:#ebf1fb"></div><div class="a" style="left:163px;top:300px;width:10px;height:10px;background:#eef4fc"></div><div class="a" style="left:173px;top:300px;width:10px;height:10px;background:#f2f6fc"></div><div class="a" style="left:93px;top:310px;width:10px;height:10px;background:#d9e7f7"></div><div class="a" style="left:103px;top:310px;width:10px;height:10px;background:#cfe1f5"></div><div class="a" style="left:113px;top:310px;width:10px;height:10px;background:#b9d4f1"></div><div class="a" style="left:123px;top:310px;width:10px;height:10px;background:#bfd8f2"></div><div class="a" style="left:133px;top:310px;width:10px;height:10px;background:#b7d3f0"></div><div class="a" style="left:143px;top:310px;width:10px;height:10px;background:#c9ddf4"></div><div class="a" style="left:153px;top:310px;width:10px;height:10px;background:#a9caee"></div><div class="a" style="left:163px;top:310px;width:10px;height:10px;background:#c2d9f2"></div><div class="a" style="left:173px;top:310px;width:10px;height:10px;background:#d3e3f6"></div>
<div class="a" style="left:103px;top:390px;width:10px;height:10px;background:#d8e6f7"></div><div class="a" style="left:113px;top:390px;width:10px;height:10px;background:#c8dcf3"></div><div class="a" style="left:123px;top:390px;width:10px;height:10px;background:#d2e2f5"></div><div class="a" style="left:133px;top:390px;width:10px;height:10px;background:#b6d1f0"></div><div class="a" style="left:143px;top:390px;width:10px;height:10px;background:#c6dbf3"></div><div class="a" style="left:153px;top:390px;width:10px;height:10px;background:#bcd6f1"></div><div class="a" style="left:163px;top:390px;width:10px;height:10px;background:#cbdef4"></div><div class="a" style="left:103px;top:400px;width:10px;height:10px;background:#f3f7fd"></div><div class="a" style="left:113px;top:400px;width:10px;height:10px;background:#eaf1fb"></div><div class="a" style="left:123px;top:400px;width:10px;height:10px;background:#ebf2fb"></div><div class="a" style="left:133px;top:400px;width:10px;height:10px;background:#f0f5fc"></div><div class="a" style="left:143px;top:400px;width:10px;height:10px;background:#e6eefa"></div><div class="a" style="left:153px;top:400px;width:10px;height:10px;background:#e4edfa"></div><div class="a" style="left:163px;top:400px;width:10px;height:10px;background:#eaf1fb"></div>
</div><!--/TBL-->
</div>
<!-- page scrollbar -->
<div class="a" style="left:1343px;top:105px;width:13px;height:643px;background:#f1f1f1"></div>
<div class="a" style="left:1343px;top:105px;width:13px;height:13px;background:#ececec"></div>
<svg class="a" style="left:1343px;top:105px" width="13" height="13"><path d="M2.6 9 H10.4 L6.5 5Z" fill="#a3a3a3"/></svg>
<div class="a" style="left:1344px;top:118px;width:10px;height:340px;background:#c1c1c1"></div>
<div class="a" style="left:1343px;top:736px;width:13px;height:12px;background:#ebebeb"></div>
<svg class="a" style="left:1343px;top:736px" width="13" height="12"><path d="M2.8 3.6 H10.2 L6.5 8Z" fill="#000"/></svg>

</body></html>
